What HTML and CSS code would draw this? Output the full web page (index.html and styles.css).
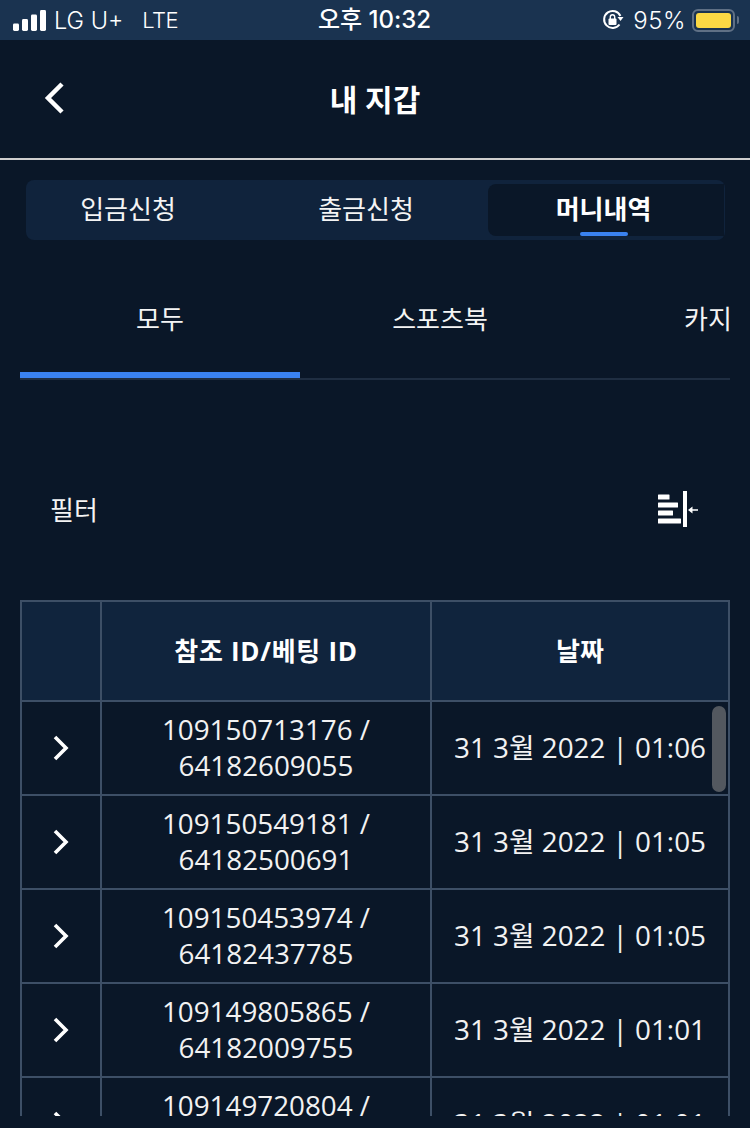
FILE: index.html
```html
<!DOCTYPE html>
<html lang="ko">
<head>
<meta charset="utf-8">
<title>내 지갑</title>
<link rel="stylesheet" href="styles.css">
</head>
<body>
<div class="status">
  <div class="status-left">
    <svg class="signal" width="33" height="21" viewBox="0 0 33 21"><rect x="0" y="13.500" width="6" height="7.500" rx="1.400"/><rect x="9" y="9" width="6" height="12" rx="1.400"/><rect x="18" y="4.500" width="6" height="16.500" rx="1.400"/><rect x="27" y="0" width="6" height="21" rx="1.400"/></svg>
    <span class="carrier">LG U+</span><span class="net">LTE</span>
  </div>
  <div class="status-time">오후 10:32</div>
  <div class="status-right">
    <svg class="lock" width="22" height="22" viewBox="0 0 22 22"><path d="M17.500 15.500A8.500 8.500 0 1 1 18.400 7" fill="none" stroke="#fff" stroke-width="2"/><path d="M15.500 8h6l-3 4z" fill="#fff"/><rect x="6.500" y="9.500" width="8" height="6.500" rx="1" fill="#fff"/><path d="M8.300 10V8a2.200 2.200 0 0 1 4.400 0v2" fill="none" stroke="#fff" stroke-width="1.400"/></svg>
    <span class="pct">95%</span>
    <div class="battery"><div class="battery-fill"></div></div>
    <div class="battery-cap"></div>
  </div>
</div>

<header class="header">
  <svg class="back" width="24" height="36" viewBox="0 0 24 36"><path d="M19 4 5 18l14 14" fill="none" stroke="#fff" stroke-width="4.500"/></svg>
  <h1 class="title">내 지갑</h1>
</header>

<nav class="seg">
  <div class="seg-item">입금신청</div>
  <div class="seg-item">출금신청</div>
  <div class="seg-item seg-active">머니내역<span class="seg-bar"></span></div>
</nav>

<nav class="subtabs">
  <div class="subtab subtab-active">모두</div>
  <div class="subtab">스포츠북</div>
  <div class="subtab">카지노</div>
</nav>

<section class="filter">
  <span class="filter-label">필터</span>
  <svg class="filter-icon" width="40" height="36" viewBox="0 0 40 36" fill="#fff"><rect x="0" y="3.500" width="11.500" height="5" rx=".5"/><rect x="0" y="11.500" width="20" height="5" rx=".5"/><rect x="0" y="19.500" width="15" height="5" rx=".5"/><rect x="0" y="27.500" width="23" height="5" rx=".5"/><rect x="25" y="0" width="4" height="36"/><path d="M30 19 34.500 15.500V18.200H40V19.800H34.500V22.500z"/></svg>
</section>

<div class="table-wrap">
  <table class="table">
    <thead>
      <tr><th class="c1"></th><th class="c2">참조 ID/베팅 ID</th><th class="c3">날짜</th></tr>
    </thead>
    <tbody>
      <tr><td class="arrow"><svg width="18" height="26" viewBox="0 0 18 26"><path d="M3 2l11 11L3 24" fill="none" stroke="#fff" stroke-width="3.600"/></svg></td><td>109150713176 / 64182609055</td><td>31 3월 2022 | 01:06</td></tr>
      <tr><td class="arrow"><svg width="18" height="26" viewBox="0 0 18 26"><path d="M3 2l11 11L3 24" fill="none" stroke="#fff" stroke-width="3.600"/></svg></td><td>109150549181 / 64182500691</td><td>31 3월 2022 | 01:05</td></tr>
      <tr><td class="arrow"><svg width="18" height="26" viewBox="0 0 18 26"><path d="M3 2l11 11L3 24" fill="none" stroke="#fff" stroke-width="3.600"/></svg></td><td>109150453974 / 64182437785</td><td>31 3월 2022 | 01:05</td></tr>
      <tr><td class="arrow"><svg width="18" height="26" viewBox="0 0 18 26"><path d="M3 2l11 11L3 24" fill="none" stroke="#fff" stroke-width="3.600"/></svg></td><td>109149805865 / 64182009755</td><td>31 3월 2022 | 01:01</td></tr>
      <tr><td class="arrow"><svg width="18" height="26" viewBox="0 0 18 26"><path d="M3 2l11 11L3 24" fill="none" stroke="#fff" stroke-width="3.600"/></svg></td><td>109149720804 / 64181953318</td><td>31 3월 2022 | 01:01</td></tr>
    </tbody>
  </table>
  <div class="scrollbar"></div>
</div>
</body>
</html>
```
FILE: styles.css
```css
* { box-sizing: border-box; }
html, body { margin: 0; padding: 0; }
body {
  width: 750px;
  height: 1128px;
  overflow: hidden;
  background: #0a1728;
  color: #fff;
  font-family: "Open Sans", "Noto Sans CJK KR", sans-serif;
}
.status {
  height: 40px;
  background: #1a3350;
  position: relative;
  display: flex;
  align-items: center;
  justify-content: space-between;
  padding: 0 11px 0 13px;
  font-family: "Inter", "Noto Sans CJK KR", sans-serif;
  font-size: 24px;
}
.status-left { display: flex; align-items: center; }
.signal { fill: #fff; margin-right: 8px; }
.carrier { margin-right: 19px; font-weight: 300; font-size: 23.500px; }
.net { font-weight: 300; font-size: 22px; letter-spacing: -.6px; }
.status-time {
  position: absolute;
  left: 318px;
  top: 2px;
  font-weight: 500;
  line-height: 36px;
}
.status-right { display: flex; align-items: center; }
.lock { margin-right: 9px; }
.pct { font-weight: 300; margin-right: 6px; letter-spacing: .5px; }
.battery {
  width: 43px;
  height: 23px;
  border: 2px solid #5f7085;
  border-radius: 6px;
  padding: 2px;
}
.battery-fill { height: 100%; background: #fbd944; border-radius: 3px; }
.battery-cap { width: 2px; height: 8px; background: #5f7085; margin-left: 2px; border-radius: 0 2px 2px 0; }

.header {
  height: 120px;
  border-bottom: 2px solid #cfcfcf;
  position: relative;
  display: flex;
  align-items: center;
  justify-content: center;
}
.back { position: absolute; left: 43px; top: 40px; }
.title {
  margin: 2px 0 0;
  font-size: 30px;
  font-weight: 700;
  line-height: 40px;
}
.seg {
  margin: 20px 25px 0 26px;
  height: 60px;
  background: #10233c;
  border-radius: 8px;
  display: grid;
  grid-template-columns: 223px 239px 236px;
  padding: 4px 1px 4px 0;
  font-size: 26px;
}
.seg-item {
  display: flex;
  align-items: center;
  justify-content: center;
  padding-bottom: 4px;
  position: relative;
  font-weight: 400;
  color: #f4f4f4;
}
.seg-item:nth-child(1) { padding-right: 19px; }
.seg-item:nth-child(2) { padding-right: 5px; }
.seg-active {
  background: #0a1728;
  border-radius: 8px 0 0 8px;
  font-weight: 700;
  color: #fff;
  padding-right: 5px;
}
.seg-bar {
  position: absolute;
  left: 92px;
  bottom: 0;
  width: 48px;
  height: 4px;
  background: #3a82f0;
  border-radius: 2px;
}
.subtabs {
  margin: 0 20px;
  height: 140px;
  display: flex;
  overflow: hidden;
  border-bottom: 2px solid #1f2e42;
  position: relative;
}
.subtab {
  flex: 0 0 280px;
  height: 138px;
  padding-top: 18px;
  display: flex;
  align-items: center;
  justify-content: center;
  font-size: 26px;
  color: #f4f4f4;
  position: relative;
}
.subtab-active::after {
  content: "";
  position: absolute;
  left: 0;
  right: 0;
  bottom: 0;
  height: 6px;
  background: #3a82f0;
}
.filter {
  height: 220px;
  padding: 38px 52px 0 50px;
  display: flex;
  align-items: center;
  justify-content: space-between;
}
.filter-label { font-size: 26px; color: #f4f4f4; }
.table-wrap {
  margin: 0 20px;
  height: 516px;
  overflow: hidden;
  position: relative;
}
.table {
  width: 710px;
  border-collapse: separate;
  border-spacing: 0;
  table-layout: fixed;
  border-top: 2px solid #3d4f66;
  border-left: 2px solid #3d4f66;
}
.table th, .table td {
  border-right: 2px solid #3d4f66;
  border-bottom: 2px solid #3d4f66;
  text-align: center;
  padding: 0;
}
.c1 { width: 80px; }
.c2 { width: 330px; letter-spacing: .7px; }
.table th {
  height: 100px;
  background: #10243d;
  font-size: 26px;
  font-weight: 700;
  padding-bottom: 3px;
}
.table td {
  height: 94px;
  font-size: 27.800px;
  line-height: 36px;
  color: #f2f2f2;
  padding: 0 12px 2px;
}
.table td.arrow { padding: 0; }
.arrow svg { display: block; margin: 0 auto; }
.scrollbar {
  position: absolute;
  left: 692px;
  top: 106px;
  width: 14px;
  height: 86px;
  border-radius: 7px;
  background: #53585f;
}
```
